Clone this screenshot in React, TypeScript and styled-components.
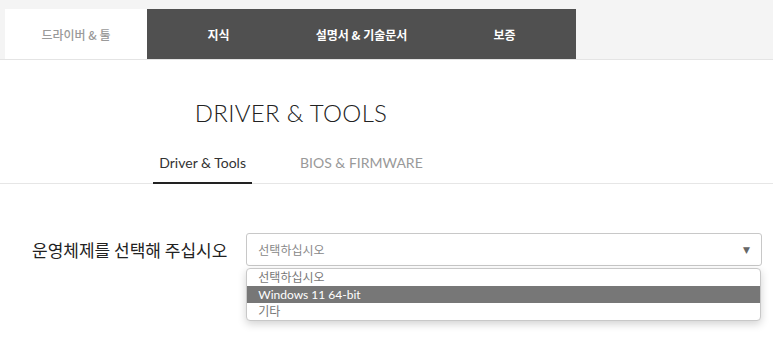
import React from "react";
import styled, { createGlobalStyle } from "styled-components";

const KR = `"Noto Sans CJK KR", "Noto Sans", sans-serif`;
const LATIN = `Lato, "Noto Sans CJK KR", sans-serif`;

const GlobalStyle = createGlobalStyle`
  body {
    margin: 0;
    background: #ffffff;
    font-family: ${LATIN};
  }
`;

const topTabs = ["드라이버 & 툴", "지식", "설명서 & 기술문서", "보증"];
const options = ["선택하십시오", "Windows 11 64-bit", "기타"];

const App = () => {
  return (
    <Page>
      <GlobalStyle />
      <TopBar>
        {topTabs.map((t, i) => (
          <TopTab key={t} active={i === 0}>
            {t}
          </TopTab>
        ))}
      </TopBar>

      <Content>
        <Title>DRIVER &amp; TOOLS</Title>
      </Content>

      <SubNav>
        <SubNavInner>
          <SubTab active>Driver &amp; Tools</SubTab>
          <SubTab>BIOS &amp; FIRMWARE</SubTab>
        </SubNavInner>
      </SubNav>

      <FormRow>
        <Label>운영체제를 선택해 주십시오</Label>
        <SelectWrap>
          <SelectBox>
            <Placeholder>선택하십시오</Placeholder>
            <Arrow>▼</Arrow>
          </SelectBox>
          <Menu>
            {options.map((o, i) => (
              <Option key={o} selected={i === 1}>
                {o}
              </Option>
            ))}
          </Menu>
        </SelectWrap>
      </FormRow>
    </Page>
  );
};

export default App;

const Page = styled.div`
  width: 773px;
  height: 346px;
  overflow: hidden;
  background: #fff;
`;

const TopBar = styled.div`
  display: flex;
  background: #f4f4f4;
  padding: 9px 0 0 5px;
  border-bottom: 1px solid #e4e4e4;
`;

const TopTab = styled.div<{ active?: boolean }>`
  width: 143px;
  height: 50px;
  display: flex;
  align-items: center;
  justify-content: center;
  font-family: ${KR};
  font-size: 12px;
  font-weight: ${(p) => (p.active ? 500 : 700)};
  color: ${(p) => (p.active ? "#9a9a9a" : "#ffffff")};
  background: ${(p) => (p.active ? "#ffffff" : "#505050")};
  &:first-child {
    width: 142px;
  }
`;

const Content = styled.div`
  width: 582px;
  text-align: center;
  padding-top: 38px;
`;

const Title = styled.h1`
  margin: 0;
  font-family: ${LATIN};
  font-weight: 300;
  font-size: 24px;
  line-height: 30px;
  letter-spacing: 0.3px;
  color: #222;
`;

const SubNav = styled.div`
  border-bottom: 1px solid #e6e6e6;
  margin-top: 25px;
`;

const SubNavInner = styled.div`
  width: 582px;
  display: flex;
  justify-content: center;
  gap: 42px;
`;

const SubTab = styled.div<{ active?: boolean }>`
  padding: 0 6px 10px;
  font-family: ${LATIN};
  font-size: 14px;
  line-height: 19px;
  color: ${(p) => (p.active ? "#333" : "#999")};
  border-bottom: 2px solid ${(p) => (p.active ? "#222" : "transparent")};
  margin-bottom: -1px;
`;

const FormRow = styled.div`
  display: flex;
  align-items: center;
  padding: 49px 11px 0 32px;
  gap: 19px;
`;

const Label = styled.div`
  font-family: ${KR};
  font-size: 17px;
  color: #222;
  white-space: nowrap;
`;

const SelectWrap = styled.div`
  position: relative;
  flex: 1;
`;

const SelectBox = styled.div`
  height: 31px;
  border: 1px solid #c8c8c8;
  border-radius: 3px;
  display: flex;
  align-items: center;
  justify-content: space-between;
  padding: 0 11px;
`;

const Placeholder = styled.span`
  font-family: ${KR};
  font-size: 12px;
  color: #888;
`;

const Arrow = styled.span`
  font-size: 9px;
  color: #666;
  font-family: "DejaVu Sans", sans-serif;
`;

const Menu = styled.div`
  position: absolute;
  top: 35px;
  left: 0;
  right: 1px;
  border: 1px solid #c8c8c8;
  border-radius: 4px;
  background: #fff;
  overflow: hidden;
  box-shadow: 0 3px 8px rgba(0, 0, 0, 0.18);
`;

const Option = styled.div<{ selected?: boolean }>`
  height: 17px;
  line-height: 17px;
  padding: 0 11px;
  font-family: ${LATIN};
  font-size: 12px;
  color: ${(p) => (p.selected ? "#fff" : "#777")};
  background: ${(p) => (p.selected ? "#777" : "transparent")};
`;
